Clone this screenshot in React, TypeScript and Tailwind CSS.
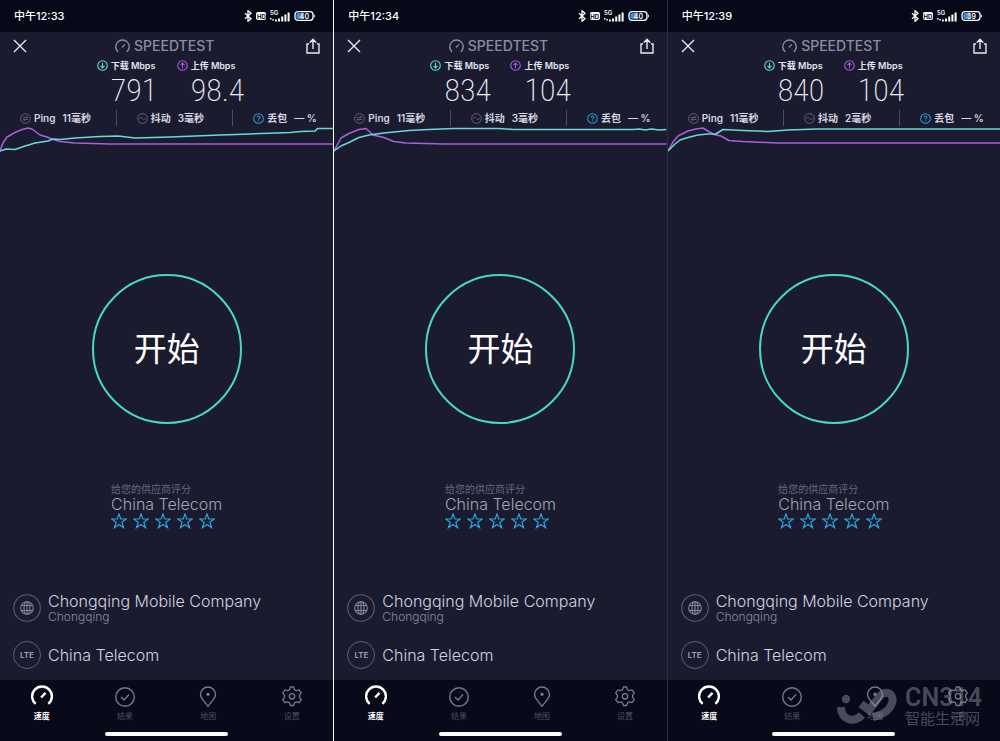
import type { ReactNode } from 'react'

type Result = {
  time: string
  battery: string
  download: string
  upload: string
  ping: string
  jitter: string
  downloadLine: string
  uploadLine: string
  divider: string
}

const results: Result[] = [
  {
    time: '12:33',
    battery: '40',
    download: '791',
    upload: '98.4',
    ping: '11毫秒',
    jitter: '3毫秒',
    downloadLine: '0,25 6,23 15,23.5 25,20 35,17 48,15 53,13 60,13.5 75,12 100,10.5 118,10 135,12 170,11 220,9 250,8 290,6.5 300,5.5 315,5 317,2.5 333,2.5',
    uploadLine: '0,25 3,17 7,11 15,6.5 22,3.5 28,2 32,3 40,9 47,11 53,13.5 60,15.5 75,17 110,18 333,18',
    divider: '',
  },
  {
    time: '12:34',
    battery: '40',
    download: '834',
    upload: '104',
    ping: '11毫秒',
    jitter: '3毫秒',
    downloadLine: '0,25 7,20 15,16.5 25,11.5 35,9 50,7 75,4.5 95,3.5 120,2.5 165,2.5 180,3.5 300,3.5 306,3 312,4 318,3 326,4 333,3.5',
    uploadLine: '0,25 7,12 15,7.5 25,3.5 32,2.5 35,5 39,9 50,11.5 60,15.5 72,17 110,18 333,18',
    divider: 'border-l border-white',
  },
  {
    time: '12:39',
    battery: '39',
    download: '840',
    upload: '104',
    ping: '11毫秒',
    jitter: '2毫秒',
    downloadLine: '0,25 7,18 12,14 20,11.5 30,9 40,8 48,8 55,3.5 75,4.5 100,5.5 120,4 150,3 333,3',
    uploadLine: '0,25 5,16 10,10 20,5 28,3 35,2 40,5 46,8.5 53,10 61,14.5 75,15.5 110,17 333,17',
    divider: 'border-l border-[#2c2d40]',
  },
]

function GaugeIcon({ className, width }: { className: string; width: number }) {
  return (
    <svg viewBox="0 0 20 20" className={className} fill="none" stroke="currentColor" strokeWidth={width}>
      <path d="M4.2 17.2A9 9 0 1 1 15.8 17.2" />
      <path d="M9.2 11.4L13.2 7.2" />
    </svg>
  )
}

function StatusBar({ time, battery }: { time: string; battery: string }) {
  return (
    <div className="flex h-8 items-center justify-between bg-[#080918] pl-[14px] pr-[17px] text-white">
      <span className="text-[11px] font-medium">中午{time}</span>
      <div className="flex items-center gap-1">
        <svg viewBox="0 0 8 12" className="h-3 w-2" fill="none" stroke="currentColor" strokeWidth="1.3">
          <path d="M1 3.3L7 8.7L4 11.3V.7L7 3.3L1 8.7" />
        </svg>
        <span className="flex h-2 w-[10px] items-center justify-center rounded-[2px] bg-white text-[6px] font-bold text-[#080918]">HD</span>
        <svg viewBox="0 0 20 12" className="h-3 w-5" fill="currentColor">
          <text x="0" y="5" fontSize="6" fontWeight="600">5G</text>
          <path d="M0 8h1.500v1.500H0zM2.300 9h1.500v1.500H2.300zM5 9.500h1.800V11.500H5zM8 8.500h2v3H8zM11.200 6.500h2v5h-2zM14.400 4.500h2v7h-2zM17.600 2.500h2v9h-2z" />
        </svg>
        <svg viewBox="0 0 22 12" className="h-3 w-[22px]">
          <rect x="1" y="1.700" width="18" height="8.600" rx="3" fill="none" stroke="#fff" strokeWidth="1.300" />
          <path d="M4 3h5v6H4a1.700 1.700 0 0 1-1.700-1.700V4.700A1.700 1.700 0 0 1 4 3z" fill="#3b8fe0" />
          <path d="M20 4.500c1.300.3 1.300 2.700 0 3z" fill="#fff" />
          <text x="10.500" y="8.600" fontSize="7" fontWeight="600" fill="#fff" textAnchor="middle">{battery}</text>
        </svg>
      </div>
    </div>
  )
}

function Speed({ label, value, up }: { label: string; value: string; up?: boolean }) {
  return (
    <div className="flex w-[60px] gap-[3px] whitespace-nowrap">
      <svg viewBox="0 0 12 12" className={up ? 'h-[11px] w-[11px] shrink-0 text-[#a65ad6]' : 'h-[11px] w-[11px] shrink-0 text-[#5fdccb]'} fill="none" stroke="currentColor" strokeWidth="1.2">
        <circle cx="6" cy="6" r="5.2" />
        <path d={up ? 'M6 9V3.300M3.800 5.500L6 3.300l2.200 2.200' : 'M6 3v5.700M3.800 6.500L6 8.700l2.200-2.200'} />
      </svg>
      <div>
        <div className="text-[9px] leading-[11px] font-semibold text-[#e4e4ee]">{label} Mbps</div>
        <div className="mt-px font-['Roboto_Condensed',sans-serif] text-[32px] leading-9 font-extralight text-[#f0f0f8]">{value}</div>
      </div>
    </div>
  )
}

function Stat({ icon, label, value, className }: { icon: ReactNode; label: string; value: string; className: string }) {
  return (
    <div className={className}>
      {icon}
      <span className="ml-[3px]">{label}</span>
      <span className="ml-[7px]">{value}</span>
    </div>
  )
}

function Stats({ ping, jitter }: { ping: string; jitter: string }) {
  return (
    <div className="flex h-4 text-[10px] leading-4 font-semibold whitespace-nowrap text-[#d6d6e2]">
      <Stat
        className="flex w-[35%] items-center border-r border-[#4a4b5e] pl-5"
        label="Ping"
        value={ping}
        icon={
          <svg viewBox="0 0 12 12" className="h-[11px] w-[11px] text-[#6f7084]" fill="none" stroke="currentColor" strokeWidth="0.900">
            <circle cx="6" cy="6" r="5.300" />
            <path d="M3 5h5.500L6.800 3M9 7H3.500l1.700 2" />
          </svg>
        }
      />
      <Stat
        className="flex w-[35%] items-center border-r border-[#4a4b5e] pl-5"
        label="抖动"
        value={jitter}
        icon={
          <svg viewBox="0 0 12 12" className="h-[11px] w-[11px] text-[#6f7084]" fill="none" stroke="currentColor" strokeWidth="0.900">
            <circle cx="6" cy="6" r="5.300" />
            <path d="M2.500 6.500C4 3.500 5 5 6 6s2 2.200 3.500-.7" />
          </svg>
        }
      />
      <Stat
        className="flex flex-1 items-center pl-5"
        label="丢包"
        value="— %"
        icon={
          <svg viewBox="0 0 12 12" className="h-[11px] w-[11px] text-[#2f9bd0]" fill="none" stroke="currentColor" strokeWidth="1.100">
            <circle cx="6" cy="6" r="5.300" />
            <path d="M4.400 4.800c0-2 3.200-2 3.200 0 0 1.100-1.600 1.100-1.600 2.300M6 8.200v1.100" />
          </svg>
        }
      />
    </div>
  )
}

function Stars() {
  return (
    <div className="mt-px flex gap-[6px] text-[#2ba3dc]">
      {[1, 2, 3, 4, 5].map((n) => (
        <button key={n} type="button" aria-label={`${n} 星`}>
          <svg viewBox="0 0 16 16" className="block h-4 w-4" fill="none" stroke="currentColor" strokeWidth="1.200">
            <path d="M8 .900L9.700 6H15.300l-4.500 3.300 1.700 5.300L8 11.400l-4.500 3.200 1.700-5.300L.7 6h5.600z" />
          </svg>
        </button>
      ))}
    </div>
  )
}

const tabs = [
  { label: '速度', icon: <GaugeIcon className="h-[22px] w-[22px]" width={2.2} /> },
  {
    label: '结果',
    icon: (
      <svg viewBox="0 0 22 22" className="h-[22px] w-[22px]" fill="none" stroke="currentColor" strokeWidth="1.400">
        <circle cx="11" cy="12" r="9.300" />
        <path d="M7 12l3 3 5-5.500" />
      </svg>
    ),
  },
  {
    label: '地图',
    icon: (
      <svg viewBox="0 0 22 22" className="h-[22px] w-[22px]" fill="none" stroke="currentColor" strokeWidth="1.400">
        <path d="M11 21.300C8.500 17.500 3.500 13.500 3.500 9.500a7.500 7.500 0 0 1 15 0c0 4-5 8-7.500 11.800z" />
        <circle cx="11" cy="9.300" r="1" fill="currentColor" />
      </svg>
    ),
  },
  {
    label: '设置',
    icon: (
      <svg viewBox="0 0 22 22" className="h-[22px] w-[22px]" fill="none" stroke="currentColor" strokeWidth="1.300" strokeLinejoin="round">
        <path d="M9.300 2h3.400l.7 2.600 1.900 1.100 2.700-.8 2.300 3-1.700 2.200v2.200l1.700 2.300-2.300 3-2.700-.8-1.900 1.100-.7 2.600H9.300l-.7-2.600-1.900-1.100-2.700.8-2.300-3 1.700-2.300V10.100L1.700 7.900l2.300-3 2.700.8 1.900-1.100z" />
        <circle cx="11" cy="11.300" r="2.700" />
      </svg>
    ),
  },
]

function TabBar() {
  return (
    <nav className="bg-[#090a19]">
      <div className="grid h-[52px] grid-cols-4 pt-[5px]">
        {tabs.map(({ label, icon }, i) => (
          <button
            key={label}
            type="button"
            className={`flex flex-col items-center gap-[3px] text-[8px] leading-3 ${i === 0 ? 'font-semibold text-white' : 'text-[#77788a]'}`}
          >
            {icon}
            <span className={i === 0 ? '' : 'text-[#4c4d5f]'}>{label}</span>
          </button>
        ))}
      </div>
      <div className="mx-auto mb-[5px] h-1 w-[37%] rounded-full bg-white" />
    </nav>
  )
}

function Phone({ result }: { result: Result }) {
  return (
    <section className={`flex min-w-0 flex-col ${result.divider}`}>
      <StatusBar time={result.time} battery={result.battery} />

      <header className="flex h-7 items-center justify-between px-[13px] text-[#e8e8f0]">
        <button type="button" aria-label="关闭">
          <svg viewBox="0 0 14 14" className="block h-[14px] w-[14px]" fill="none" stroke="currentColor" strokeWidth="1.400">
            <path d="M1 1l12 12M13 1L1 13" />
          </svg>
        </button>
        <div className="flex items-center gap-1 pr-1 text-[#8c8ca2]">
          <GaugeIcon className="h-[15px] w-[15px]" width={1.8} />
          <h1 className="text-sm leading-5 font-medium">SPEEDTEST</h1>
        </div>
        <button type="button" aria-label="分享">
          <svg viewBox="0 0 14 16" className="block h-4 w-[14px]" fill="none" stroke="currentColor" strokeWidth="1.400">
            <path d="M3 6H1v9h12V6h-2M7 11V1.500M3.700 4.700L7 1.300l3.300 3.400" />
          </svg>
        </button>
      </header>

      <div className="flex h-[50px] justify-center gap-5">
        <Speed label="下载" value={result.download} />
        <Speed label="上传" value={result.upload} up />
      </div>

      <Stats ping={result.ping} jitter={result.jitter} />

      <svg viewBox="0 0 333 28" preserveAspectRatio="none" className="h-7 w-full" fill="none" strokeWidth="1.500" strokeLinejoin="round">
        <polyline points={result.uploadLine} stroke="#a860dc" />
        <polyline points={result.downloadLine} stroke="#68d8d8" />
      </svg>

      <main className="flex flex-1 flex-col items-center pt-[120px]">
        <button
          type="button"
          className="h-[150px] w-[150px] rounded-full border-2 border-[#48d9c5] pt-px text-[33px] text-white"
        >
          开始
        </button>
        <div className="mt-[58px]">
          <p className="text-[10px] leading-[14px] text-[#66677c]">给您的供应商评分</p>
          <p className="text-base leading-4 font-light text-[#a3a4b6]">China Telecom</p>
          <Stars />
        </div>
      </main>

      <div className="flex flex-col gap-[17px] px-[13px] pb-[11px] text-[#d2d3e0]">
        <div className="flex items-center gap-[7px]">
          <svg viewBox="0 0 28 28" className="h-7 w-7" fill="none" stroke="#85869a" strokeWidth="1.100">
            <circle cx="14" cy="14" r="13.300" stroke="#5d5e72" />
            <circle cx="14" cy="14" r="6.300" />
            <ellipse cx="14" cy="14" rx="3" ry="6.300" />
            <path d="M14 7.700v12.600M8.500 11.500h11M8.500 16.500h11" />
          </svg>
          <div className="pt-px">
            <p className="text-base leading-[18px] font-light">Chongqing Mobile Company</p>
            <p className="text-xs leading-[14px] font-light text-[#8a8b9f]">Chongqing</p>
          </div>
        </div>
        <div className="flex items-center gap-[7px]">
          <span className="flex h-7 w-7 items-center justify-center rounded-full border border-[#5d5e72] text-[8px] font-semibold text-[#a0a1b4]">
            LTE
          </span>
          <p className="text-base leading-[18px] font-light">China Telecom</p>
        </div>
      </div>

      <TabBar />
    </section>
  )
}

function Watermark() {
  return (
    <div className="pointer-events-none absolute right-[18px] bottom-[14px] flex items-center gap-2 text-[#9b9cab]/45">
      <svg viewBox="0 0 60 40" className="h-10 w-[60px]" fill="none" stroke="currentColor" strokeWidth="8">
        <circle cx="9" cy="13" r="4.200" fill="currentColor" stroke="none" />
        <path d="M4 21C4 35 18 37 25 29M24 18L32 24L43 10C49 3 58 8 55 17C53 24 45 29 36 31" />
      </svg>
      <div>
        <div className="font-[Roboto,sans-serif] text-[25px] leading-[26px] font-semibold">CN314</div>
        <div className="text-[15px] leading-4">智能生活网</div>
      </div>
    </div>
  )
}

export default function App() {
  return (
    <div className="relative grid min-h-screen grid-cols-3 bg-[#1a1b2e] font-[Inter,'Noto_Sans_CJK_SC',sans-serif]">
      {results.map((result) => (
        <Phone key={result.time} result={result} />
      ))}
      <Watermark />
    </div>
  )
}
